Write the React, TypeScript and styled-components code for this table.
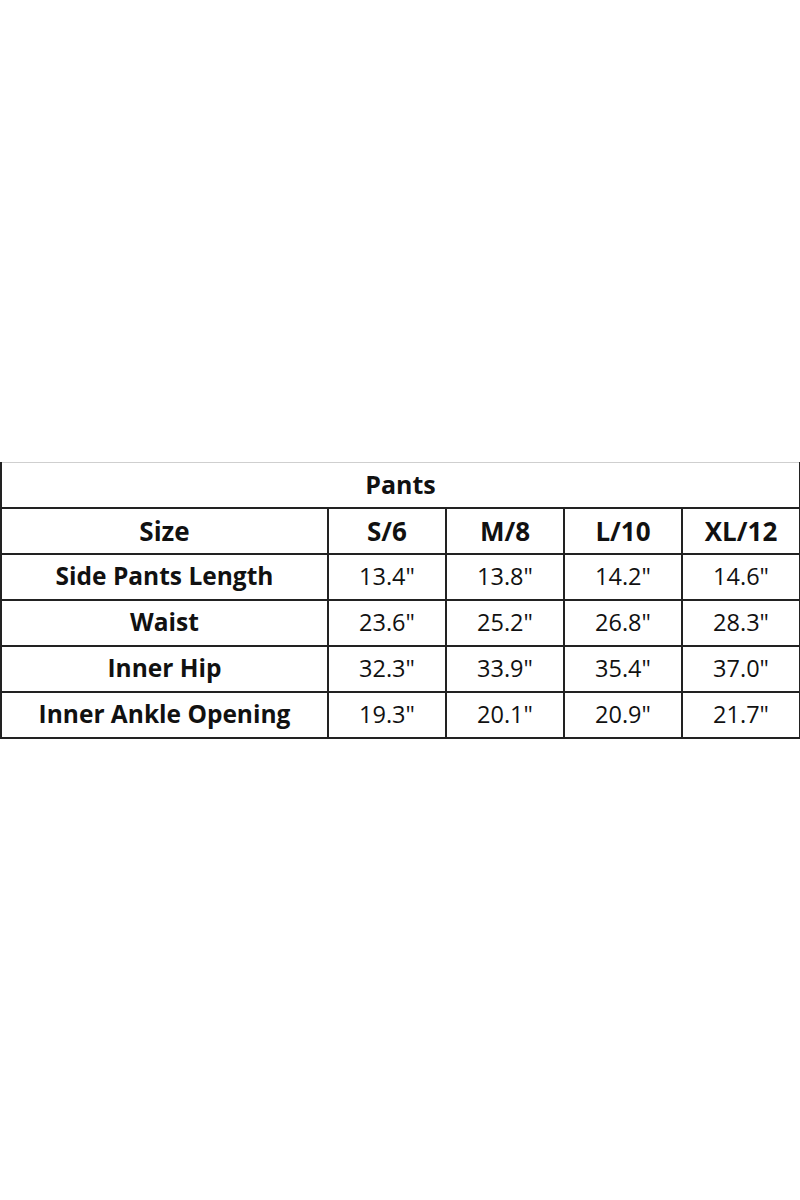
import React from "react";
import styled, { createGlobalStyle } from "styled-components";

const GlobalStyle = createGlobalStyle`
  html, body {
    margin: 0;
    padding: 0;
    background: #ffffff;
  }
`;

const sizes = ["S/6", "M/8", "L/10", "XL/12"];

const rows: [string, string[]][] = [
  ["Side Pants Length", ['13.4"', '13.8"', '14.2"', '14.6"']],
  ["Waist", ['23.6"', '25.2"', '26.8"', '28.3"']],
  ["Inner Hip", ['32.3"', '33.9"', '35.4"', '37.0"']],
  ["Inner Ankle Opening", ['19.3"', '20.1"', '20.9"', '21.7"']],
];

const Page = styled.div`
  height: 1200px;
  display: flex;
  flex-direction: column;
  justify-content: center;
`;

const Table = styled.table`
  width: 799px;
  table-layout: fixed;
  border-collapse: collapse;
  font-family: "Open Sans", "Liberation Sans", sans-serif;
  color: #111;
  line-height: 1;
`;

const LabelCol = styled.col`
  width: 327px;
`;

const SizeCol = styled.col`
  width: 118px;
`;

const TitleCell = styled.th`
  height: 44px;
  border: 2px solid #222;
  border-top: 1px solid #cfcfcf;
  font-size: 25px;
  font-weight: 700;
  text-align: center;
  padding: 0;
`;

const Cell = styled.td<{ $kind: "head" | "label" | "value" }>`
  height: 44px;
  border: 2px solid #222;
  padding: 0;
  text-align: center;
  white-space: nowrap;
  font-size: ${(p) =>
    p.$kind === "head" ? "26px" : p.$kind === "label" ? "24.5px" : "23.5px"};
  font-weight: ${(p) => (p.$kind === "value" ? 400 : 700)};
`;

export default function App() {
  return (
    <Page>
      <GlobalStyle />
      <Table>
        <colgroup>
          <LabelCol />
          {sizes.map((s) => (
            <SizeCol key={s} />
          ))}
        </colgroup>
        <thead>
          <tr>
            <TitleCell colSpan={5}>Pants</TitleCell>
          </tr>
        </thead>
        <tbody>
          <tr>
            <Cell $kind="head">Size</Cell>
            {sizes.map((s) => (
              <Cell key={s} $kind="head">
                {s}
              </Cell>
            ))}
          </tr>
          {rows.map(([label, values]) => (
            <tr key={label}>
              <Cell $kind="label">{label}</Cell>
              {values.map((v, i) => (
                <Cell key={i} $kind="value">
                  {v}
                </Cell>
              ))}
            </tr>
          ))}
        </tbody>
      </Table>
    </Page>
  );
}
